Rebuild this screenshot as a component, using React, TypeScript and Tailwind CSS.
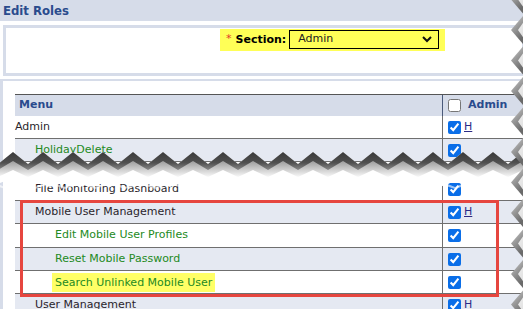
import React from "react";

type MenuRow = {
  label: string;
  indent: number;
  light?: boolean;
  green?: boolean;
  h?: boolean;
  mark?: boolean;
  tall?: boolean;
};

const bottomRows: MenuRow[] = [
  { label: "File Monitoring Dashboard", indent: 20 },
  { label: "Mobile User Management", indent: 20, light: true, h: true },
  { label: "Edit Mobile User Profiles", indent: 40, green: true, tall: true },
  { label: "Reset Mobile Password", indent: 40, green: true, light: true },
  { label: "Search Unlinked Mobile User", indent: 37, green: true, mark: true },
  { label: "User Management", indent: 20, light: true, h: true },
];

const Check = ({ on = true }: { on?: boolean }) => (
  <input
    type="checkbox"
    defaultChecked={on}
    className="w-[13px] h-[13px] m-0 accent-[#0a6ee8]"
  />
);

const Row = ({ row }: { row: MenuRow }) => (
  <div
    className={`flex border-b border-[#6f6f6f] ${row.tall ? "h-[24px]" : "h-[23px]"} ${
      row.light ? "bg-[#e5e9f2]" : "bg-white"
    }`}
  >
    <div
      className={`w-[427px] flex items-center ${row.green ? "text-[#238a23]" : "text-[#2a1f2c]"}`}
      style={{ paddingLeft: row.indent }}
    >
      {row.mark ? (
        <span className="bg-[#ffff66] px-[3px] py-[3px] leading-[13px]">{row.label}</span>
      ) : (
        row.label
      )}
    </div>
    <div className="flex-1 border-l border-[#6f6f6f] flex items-center pl-[5px]">
      <Check />
      {row.h && <span className="ml-[3px] underline text-[#2b2b86]">H</span>}
    </div>
  </div>
);

// zigzag points, period 30px, alternating top/bottom y
const zig = (x0: number, yTop: number, yBot: number) => {
  const pts: string[] = [];
  let up = true;
  for (let x = -30; x <= 570; x += 15) {
    pts.push(`${x + x0},${up ? yTop : yBot}`);
    up = !up;
  }
  return pts;
};

const band = (a: string[], b: string[]) => [...a, ...[...b].reverse()].join(" ");

const HorizontalTear = () => (
  <svg className="absolute left-0 top-[140px]" width="525" height="52" viewBox="0 0 525 52">
    <defs>
      <linearGradient id="ridge" gradientUnits="userSpaceOnUse" x1="0" y1="12" x2="0" y2="30">
        <stop offset="0" stopColor="#3a3a3a" />
        <stop offset="0.6" stopColor="#505050" />
        <stop offset="1" stopColor="#8a8a8a" />
      </linearGradient>
      <linearGradient id="shade" gradientUnits="userSpaceOnUse" x1="0" y1="21" x2="0" y2="38">
        <stop offset="0" stopColor="#9c9c9c" />
        <stop offset="1" stopColor="#ffffff" />
      </linearGradient>
    </defs>
    <polygon points={band(zig(13, 12, 24), zig(5, 41, 47))} fill="#ffffff" />
    <polygon points={band(zig(5, 47, 41), zig(5, 49, 44))} fill="#ffffff" opacity="0.6" />
    <polygon points={band(zig(13, 20, 29), zig(13, 30, 37))} fill="url(#shade)" />
    <polygon points={band(zig(13, 12, 24), zig(13, 21, 30))} fill="url(#ridge)" />
  </svg>
);

const RightTear = () => {
  const tips: number[] = [];
  for (let k = -1; k <= 10; k++) tips.push(30 + 30.5 * k);
  return (
    <svg className="absolute right-0 top-0" width="26" height="309" viewBox="0 0 26 309">
      <defs>
        <linearGradient id="tooth" x1="0" y1="0" x2="0.4" y2="1">
          <stop offset="0" stopColor="#d2d2d2" />
          <stop offset="0.5" stopColor="#9a9a9a" />
          <stop offset="1" stopColor="#6a6a6a" />
        </linearGradient>
      </defs>
      <rect x="24" y="0" width="2" height="309" fill="#ffffff" />
      {tips.map((t) => (
        <g key={t}>
          <polygon points={`12,${t} 24,${t - 14} 24,${t + 14}`} fill="url(#tooth)" />
          <polygon points={`19,${t} 26,${t - 10} 26,${t + 10}`} fill="#ffffff" opacity="0.8" />
        </g>
      ))}
    </svg>
  );
};

export default function App() {
  return (
    <div className="relative w-[525px] h-[309px] overflow-hidden bg-white font-['DejaVu_Sans',Verdana,sans-serif] text-[11px]">
      <div className="h-[21px] bg-[#d6dce9] pl-[3px] flex items-center font-['DejaVu_Sans_Condensed','DejaVu_Sans',sans-serif] font-bold text-[13px] text-[#2a4b8d]">
        Edit Roles
      </div>

      <div className="mt-[4px] ml-[3px] h-[51px] border-[3px] border-[#d6dce9]">
        <div className="ml-[214px] mt-[1px] w-[225px] h-[22px] bg-[#ffff57] flex items-start">
          <span className="text-[#e23b2a] mt-[3px] ml-[6px] text-[11px] leading-[13px]">*</span>
          <span className="ml-[4px] mt-[4px] font-bold text-black leading-[13px]">Section:</span>
          <div className="ml-[3px] mt-[1px] w-[150px] h-[19px] border border-black bg-[#ffff57] flex items-center pl-[8px] pr-[6px]">
            <span className="flex-1 text-[#222]">Admin</span>
            <svg width="10" height="7" viewBox="0 0 10 7">
              <polyline points="1,1 5,5 9,1" fill="none" stroke="#111" strokeWidth="2" />
            </svg>
          </div>
        </div>
      </div>

      <div className="mt-[3px] border-t-2 border-l-[3px] border-[#d6dce9] pl-[12px] pt-[13px] h-[240px]">
        <div className="w-[520px]">
          <div className="flex h-[22px] border-t border-[#555] bg-[#d6dce9] font-bold text-[#2a4b8d]">
            <div className="w-[427px] flex items-center pl-[4px]">Menu</div>
            <div className="flex-1 border-l border-[#4a5a7a] flex items-center pl-[5px]">
              <Check on={false} />
              <span className="ml-[7px]">Admin</span>
            </div>
          </div>
          <div className="flex h-[23px] border-b border-[#6f6f6f] bg-white">
            <div className="w-[427px] flex items-center text-[#2a1f2c]">Admin</div>
            <div className="flex-1 border-l border-[#6f6f6f] flex items-center pl-[5px]">
              <Check />
              <span className="ml-[3px] underline text-[#2b2b86]">H</span>
            </div>
          </div>
          <div className="flex h-[23px] border-b border-[#6f6f6f] bg-[#e5e9f2]">
            <div className="w-[427px] flex items-center pl-[20px] text-[#238a23]">HolidayDelete</div>
            <div className="flex-1 border-l border-[#6f6f6f] flex items-center pl-[5px]">
              <Check />
            </div>
          </div>
          <div className="h-[16px]" />
          {bottomRows.map((r) => (
            <Row key={r.label} row={r} />
          ))}
        </div>
      </div>

      <HorizontalTear />
      <div className="absolute left-[20px] top-[200px] w-[479px] h-[97px] border-[3px] border-[#e6463f]" />
      <RightTear />
    </div>
  );
}
